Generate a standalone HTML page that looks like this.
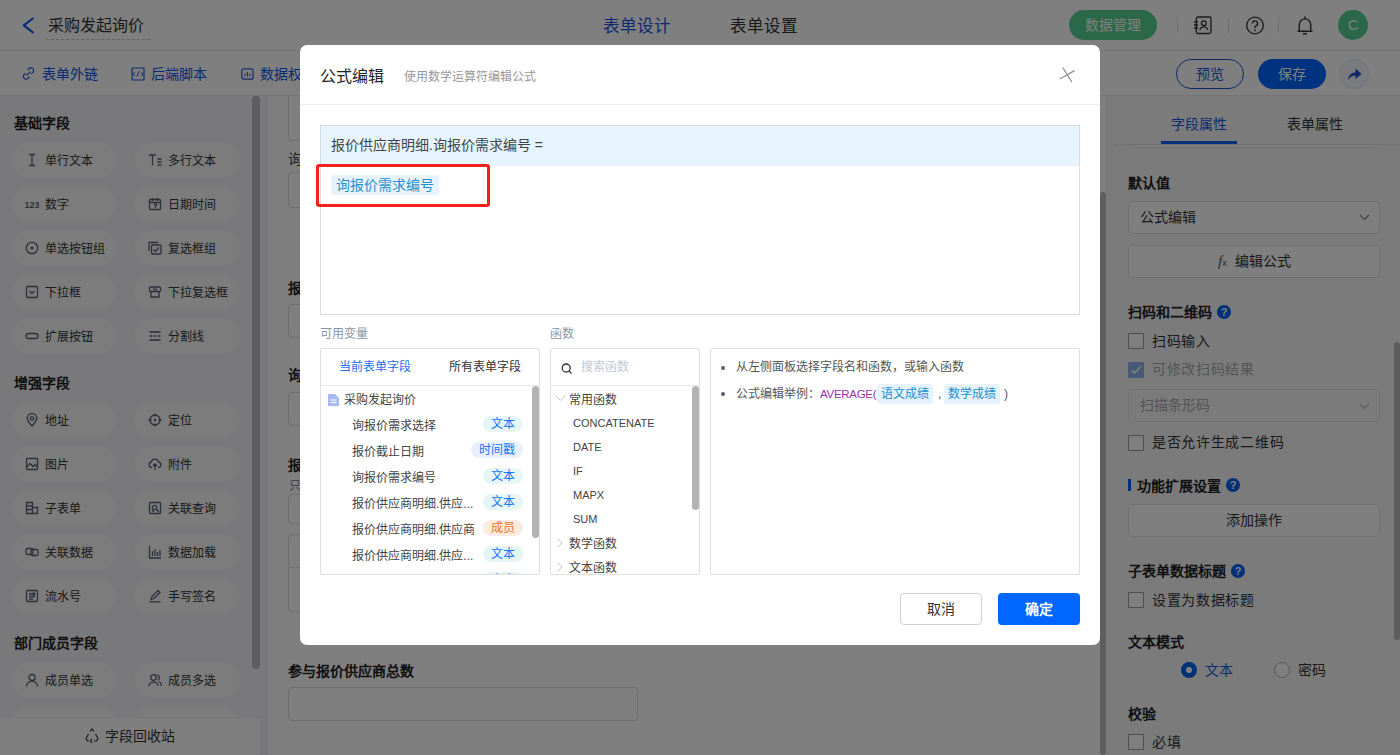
<!DOCTYPE html>
<html lang="zh-CN"><head><meta charset="utf-8">
<style>
*{box-sizing:border-box;margin:0;padding:0}
html,body{width:1400px;height:755px;overflow:hidden;background:#fff;font-family:"Liberation Sans",sans-serif;color:#333}
.a{position:absolute}
#hdr{left:0;top:0;width:1400px;height:51px;background:#fff;border-bottom:1px solid #e9e9e9}
#tb{left:0;top:51px;width:1400px;height:45px;background:#fff}
#lp{left:0;top:96px;width:268px;height:659px;background:#f2f3f6}
#cv{left:268px;top:96px;width:838px;height:659px;background:#fff}
#rp{left:1106px;top:96px;width:294px;height:659px;background:#f6f7f9}
.sec{font-size:14px;font-weight:bold;color:#1f1f1f}
.pill{width:104px;height:34px;border-radius:17px;background:#f8f9fb;font-size:12px;color:#333;line-height:36px;padding-left:33px;white-space:nowrap}
.pill svg{position:absolute;left:13px;top:10px;width:14px;height:14px}

.box{left:288px;width:350px;border:1px solid #dcdcdc;border-radius:4px;background:#fff}
.lab{left:288px;font-size:14px;font-weight:bold;color:#222;line-height:18px}
.rsec{font-size:14px;font-weight:bold;color:#222;line-height:20px;position:absolute;left:1128px}
.rbox{position:absolute;left:1128px;width:252px;height:33px;border:1px solid #dedede;border-radius:4px;background:#fff;font-size:14px;line-height:31px;color:#333}
.cb{position:absolute;left:1128px;width:16px;height:16px;border:1px solid #9c9ca4;border-radius:1px;background:#fff}
.ct{position:absolute;left:1152px;font-size:14px;color:#333;line-height:20px;letter-spacing:.7px}
.q{position:absolute;width:14px;height:14px;border-radius:7px;background:#0060f0;color:#fff;font-size:11px;font-weight:bold;line-height:14px;text-align:center}
.vi{font-size:12px;color:#444;line-height:19px;white-space:nowrap}
.tg{width:40px;height:16px;border-radius:8px;font-size:12px;line-height:16px;text-align:center}
.tc{background:#e6f6f6;color:#1677ff}
.tb2{background:#e8f0fd;color:#1677ff}
.to{background:#fdebe0;color:#f0711e}
.dt{height:20px;padding:0 4px;border-radius:3px;background:#e6f3fd;color:#1e8fd0;font-size:12px;line-height:20px}
#mask{left:0;top:0;width:1400px;height:755px;background:rgba(0,0,0,.5)}
#modal{left:300px;top:45px;width:800px;height:600px;background:#fff;border-radius:7px}
</style></head><body>
<!-- header -->
<div id="hdr" class="a">
  <svg class="a" style="left:20px;top:15px" width="16" height="21" viewBox="0 0 16 21"><path d="M12.8 3.5L3.8 10.3L12.8 17.3" fill="none" stroke="#0a55e6" stroke-width="2.1" stroke-linecap="round" stroke-linejoin="round"/></svg>
  <div class="a" style="left:48px;top:15px;font-size:16px;color:#333;line-height:22px">采购发起询价</div>
  <div class="a" style="left:46px;top:39px;width:104px;border-top:1px dashed #c8c8c8"></div>
  <div class="a" style="left:603px;top:15px;font-size:16.5px;color:#1a4fe0;line-height:22px">表单设计</div>
  <div class="a" style="left:730px;top:15px;font-size:16.5px;color:#333;line-height:22px">表单设置</div>
  <div class="a" style="left:1069px;top:10px;width:88px;height:30px;border-radius:15px;background:#56d192;color:#fff;font-size:14px;line-height:30px;text-align:center">数据管理</div>
  <div class="a" style="left:1177px;top:17px;width:1px;height:16px;background:#ddd"></div>
  <div class="a" style="left:1228px;top:17px;width:1px;height:16px;background:#ddd"></div>
  <div class="a" style="left:1278px;top:17px;width:1px;height:16px;background:#ddd"></div>

  <svg class="a" style="left:1192px;top:16px" width="20" height="19" viewBox="0 0 20 19"><rect x="4.3" y="1" width="14.7" height="16.5" rx="1.5" fill="none" stroke="#333" stroke-width="1.3"/><path d="M2 6h4M2 9h4M2 12h4" stroke="#333" stroke-width="1.3"/><circle cx="11.8" cy="7.2" r="2.4" fill="none" stroke="#333" stroke-width="1.3"/><path d="M7.7 14.2a4.2 4.2 0 0 1 8.2 0" fill="none" stroke="#333" stroke-width="1.3"/></svg>
  <svg class="a" style="left:1245px;top:16px" width="20" height="19" viewBox="0 0 20 19"><circle cx="10" cy="9.5" r="8.3" fill="none" stroke="#333" stroke-width="1.3"/><path d="M7.4 7.5a2.6 2.6 0 1 1 3.6 2.4c-.7.3-1 .8-1 1.5v.8" fill="none" stroke="#333" stroke-width="1.4"/><circle cx="10" cy="14.3" r=".9" fill="#333"/></svg>
  <svg class="a" style="left:1296px;top:16px" width="18" height="19" viewBox="0 0 18 19"><path d="M9 .6v1.6M3.3 15V8.6a5.7 5.7 0 0 1 11.4 0V15M1.5 15.2h15M7 17.8h4" fill="none" stroke="#333" stroke-width="1.4"/></svg>
  <div class="a" style="left:1338px;top:10px;width:30px;height:30px;border-radius:15px;background:#56d192;color:#fff;font-size:14px;line-height:30px;text-align:center">C</div>
</div>
<!-- toolbar -->
<div id="tb" class="a">

  <svg class="a" style="left:22px;top:16px" width="13" height="13" viewBox="0 0 13 13"><path d="M5.5 3.2l1.6-1.6a2.6 2.6 0 0 1 3.7 3.7L9.2 6.9M3.8 6.1L2.2 7.7a2.6 2.6 0 0 0 3.7 3.7L7.5 9.8M4.6 8.4l3.8-3.8" fill="none" stroke="#1a57d6" stroke-width="1.2"/></svg>
  <svg class="a" style="left:131px;top:16px" width="14" height="14" viewBox="0 0 14 14"><rect x="1" y="1" width="12" height="12" rx=".8" fill="none" stroke="#1a57d6" stroke-width="1.2"/><path d="M4.2 5L2 7l2.2 2M9.8 5L12 7 9.8 9M8 4.3L6 9.7" fill="none" stroke="#1a57d6" stroke-width="1"/></svg>
  <svg class="a" style="left:241px;top:17px" width="13" height="12" viewBox="0 0 13 12"><rect x=".8" y=".8" width="11.2" height="10.4" rx="2" fill="none" stroke="#1a57d6" stroke-width="1.2"/><path d="M4 5.5v3M6.4 4v4.5M8.8 5.5v3" stroke="#1a57d6" stroke-width="1"/></svg>
  <div class="a" style="left:42px;top:13px;font-size:14px;color:#0a55e6;line-height:20px">表单外链</div>
  <div class="a" style="left:151px;top:13px;font-size:14px;color:#0a55e6;line-height:20px">后端脚本</div>
  <div class="a" style="left:260px;top:13px;font-size:14px;color:#0a55e6;line-height:20px">数据权</div>
  <div class="a" style="left:1176px;top:8px;width:68px;height:30px;border-radius:15px;border:1px solid #1a57d6;color:#1a57d6;font-size:14px;line-height:28px;text-align:center">预览</div>
  <div class="a" style="left:1258px;top:8px;width:68px;height:30px;border-radius:15px;background:#0066ff;color:#fff;font-size:14px;line-height:30px;text-align:center">保存</div>
  <div class="a" style="left:1339px;top:8px;width:30px;height:30px;border-radius:15px;border:1px solid #dfe6f5;background:#f4f7fd"><svg class="a" style="left:7px;top:7px" width="15" height="14" viewBox="0 0 15 14"><path d="M1 13C1.5 8 4.5 5.5 8.5 5.5V1.5L14.5 7 8.5 12V8.5C5.5 8.5 3 9.8 1 13Z" fill="#1a4fd0"/></svg></div>
</div>
<div class="a" style="left:0;top:95px;width:1400px;height:1px;background:#ececec"></div>
<!-- left panel -->
<div id="lp" class="a"></div>
<div class="a sec" style="left:14px;top:112px">基础字段</div>
<div class="a pill" style="left:12px;top:143px"><svg viewBox="0 0 14 14"><path d="M4 1.5h6M4 12.5h6M7 1.5v11" fill="none" stroke="#596175" stroke-width="1.3"/></svg>单行文本</div>
<div class="a pill" style="left:135px;top:143px"><svg viewBox="0 0 14 14"><path d="M1 2h7M4.5 2v10.5M9.5 6h4M9.5 9h4M9.5 12h4" fill="none" stroke="#596175" stroke-width="1.3"/></svg>多行文本</div>
<div class="a pill" style="left:12px;top:187px"><svg viewBox="0 0 14 14"><text x="-0.5" y="10.5" font-size="9" font-weight="bold" fill="#596175" font-family="Liberation Sans">123</text></svg>数字</div>
<div class="a pill" style="left:135px;top:187px"><svg viewBox="0 0 14 14"><rect x="1.5" y="2.5" width="11" height="10" rx="1" fill="none" stroke="#596175" stroke-width="1.3"/><path d="M1.5 5.5h11M4.5 1v3M9.5 1v3M6 7.5h2.5l-1.5 3.5" fill="none" stroke="#596175" stroke-width="1.3"/></svg>日期时间</div>
<div class="a pill" style="left:12px;top:231px"><svg viewBox="0 0 14 14"><circle cx="7" cy="7" r="5.7" fill="none" stroke="#596175" stroke-width="1.3"/><circle cx="7" cy="7" r="1.6" fill="#596175"/></svg>单选按钮组</div>
<div class="a pill" style="left:135px;top:231px"><svg viewBox="0 0 14 14"><path d="M1 10V1.5h9" fill="none" stroke="#596175" stroke-width="1.3"/><rect x="3.5" y="4" width="9.5" height="9" rx="1" fill="none" stroke="#596175" stroke-width="1.3"/><path d="M5.5 8.5l2 2 3.5-4" fill="none" stroke="#596175" stroke-width="1.3"/></svg>复选框组</div>
<div class="a pill" style="left:12px;top:275px"><svg viewBox="0 0 14 14"><rect x="1.5" y="1.5" width="11" height="11" rx="1" fill="none" stroke="#596175" stroke-width="1.3"/><path d="M4.5 6l2.5 2.5 2.5-2.5" fill="none" stroke="#596175" stroke-width="1.3"/></svg>下拉框</div>
<div class="a pill" style="left:135px;top:275px"><svg viewBox="0 0 14 14"><rect x="1.5" y="2" width="11" height="4.5" rx="1" fill="none" stroke="#596175" stroke-width="1.3"/><path d="M3 6.5v5.5h8v-5.5M5 3.5l2 1.5 2-1.5" fill="none" stroke="#596175" stroke-width="1.3"/></svg>下拉复选框</div>
<div class="a pill" style="left:12px;top:319px"><svg viewBox="0 0 14 14"><rect x="1" y="4.5" width="12" height="5" rx="2.5" fill="none" stroke="#596175" stroke-width="1.3"/></svg>扩展按钮</div>
<div class="a pill" style="left:135px;top:319px"><svg viewBox="0 0 14 14"><path d="M1.5 3h11M1.5 7h3M6 7h2M9.5 7h3M1.5 11h11" fill="none" stroke="#596175" stroke-width="1.3"/></svg>分割线</div>
<div class="a sec" style="left:14px;top:372px">增强字段</div>
<div class="a pill" style="left:12px;top:403px"><svg viewBox="0 0 14 14"><path d="M7 13C3.5 9.5 2.3 7.3 2.3 5.3A4.7 4.7 0 0 1 11.7 5.3C11.7 7.3 10.5 9.5 7 13Z" fill="none" stroke="#596175" stroke-width="1.3"/><circle cx="7" cy="5.5" r="1.7" fill="none" stroke="#596175" stroke-width="1.3"/></svg>地址</div>
<div class="a pill" style="left:135px;top:403px"><svg viewBox="0 0 14 14"><circle cx="7" cy="7" r="5" fill="none" stroke="#596175" stroke-width="1.3"/><circle cx="7" cy="7" r="1.2" fill="#596175"/><path d="M7 0.5v3M7 10.5v3M0.5 7h3M10.5 7h3" fill="none" stroke="#596175" stroke-width="1.3"/></svg>定位</div>
<div class="a pill" style="left:12px;top:447px"><svg viewBox="0 0 14 14"><rect x="1.5" y="1.5" width="11" height="11" rx="1" fill="none" stroke="#596175" stroke-width="1.3"/><path d="M1.5 10l3.5-3.5 3 3 2-2 2.5 2.5" fill="none" stroke="#596175" stroke-width="1.3"/></svg>图片</div>
<div class="a pill" style="left:135px;top:447px"><svg viewBox="0 0 14 14"><path d="M4 10.5H3.5A2.8 2.8 0 0 1 3.3 5 3.8 3.8 0 0 1 10.7 5 2.8 2.8 0 0 1 10.5 10.5H10M7 13V7M5 9l2-2 2 2" fill="none" stroke="#596175" stroke-width="1.3"/></svg>附件</div>
<div class="a pill" style="left:12px;top:491px"><svg viewBox="0 0 14 14"><path d="M1.5 1.5h6v11h-6zM1.5 5h6M1.5 8.5h6M7.5 6.5h5v6h-5" fill="none" stroke="#596175" stroke-width="1.3"/></svg>子表单</div>
<div class="a pill" style="left:135px;top:491px"><svg viewBox="0 0 14 14"><rect x="1.5" y="1.5" width="11" height="11" rx="1" fill="none" stroke="#596175" stroke-width="1.3"/><circle cx="6.5" cy="6.5" r="2.2" fill="none" stroke="#596175" stroke-width="1.3"/><path d="M8 8l3 3M4 10h2" fill="none" stroke="#596175" stroke-width="1.3"/></svg>关联查询</div>
<div class="a pill" style="left:12px;top:535px"><svg viewBox="0 0 14 14"><rect x="1" y="3.5" width="7" height="6" rx="1.5" fill="none" stroke="#596175" stroke-width="1.3"/><rect x="6" y="4.5" width="7" height="6" rx="1.5" fill="none" stroke="#596175" stroke-width="1.3"/></svg>关联数据</div>
<div class="a pill" style="left:135px;top:535px"><svg viewBox="0 0 14 14"><path d="M1.5 1v12h11.5M4.5 6v5M7 4v7M9.5 7v4M12 5v6" fill="none" stroke="#596175" stroke-width="1.3"/></svg>数据加载</div>
<div class="a pill" style="left:12px;top:579px"><svg viewBox="0 0 14 14"><rect x="1.5" y="1.5" width="11" height="11" rx="1" fill="none" stroke="#596175" stroke-width="1.3"/><path d="M4 5h6M4 7.5h6M4 10h4M8 3.5l2 1.5-2 1.5" fill="none" stroke="#596175" stroke-width="1.3"/></svg>流水号</div>
<div class="a pill" style="left:135px;top:579px"><svg viewBox="0 0 14 14"><path d="M3 10.5l1-3L10 1.5l2 2-6 6zM1.5 12.8h11" fill="none" stroke="#596175" stroke-width="1.3"/></svg>手写签名</div>
<div class="a sec" style="left:14px;top:632px">部门成员字段</div>
<div class="a pill" style="left:12px;top:663px"><svg viewBox="0 0 14 14"><circle cx="7" cy="4.5" r="3" fill="none" stroke="#596175" stroke-width="1.3"/><path d="M1.5 13.5A5.5 5.5 0 0 1 12.5 13.5" fill="none" stroke="#596175" stroke-width="1.3"/></svg>成员单选</div>
<div class="a pill" style="left:135px;top:663px"><svg viewBox="0 0 14 14"><circle cx="5.5" cy="4.5" r="2.8" fill="none" stroke="#596175" stroke-width="1.3"/><path d="M0.8 13A4.8 4.8 0 0 1 10.2 13M9 1.8A2.8 2.8 0 0 1 9.5 7.2M11 8.5A4.8 4.8 0 0 1 13.5 13" fill="none" stroke="#596175" stroke-width="1.3"/></svg>成员多选</div>
<div class="a pill" style="left:12px;top:707px"><svg viewBox="0 0 14 14"><rect x="4.5" y="1" width="5" height="4" fill="none" stroke="#596175" stroke-width="1.3"/><path d="M7 5v3M2.5 11V8h9v3" fill="none" stroke="#596175" stroke-width="1.3"/></svg>部门单选</div>
<div class="a pill" style="left:135px;top:707px"><svg viewBox="0 0 14 14"><rect x="4.5" y="1" width="5" height="4" fill="none" stroke="#596175" stroke-width="1.3"/><path d="M7 5v3M2.5 11V8h9v3" fill="none" stroke="#596175" stroke-width="1.3"/></svg>部门多选</div>
<div class="a" style="left:252px;top:96px;width:8px;height:573px;border-radius:4px;background:#bcbcbc"></div>
<div class="a" style="left:0;top:717px;width:260px;height:38px;background:#fff;border-top:1px solid #eee;font-size:14px;line-height:37px;color:#333;padding-left:105px">字段回收站</div>
<svg class="a" style="left:84px;top:728px" width="16" height="16" viewBox="0 0 16 16"><path d="M6 3.5L8 1l2 2.5M11.5 6l2.5 4.5-1.5 2.5H10M5 13H3.5L2 10.5 4.5 6M8 15l-1.5-2L8 11" fill="none" stroke="#333" stroke-width="1.2"/></svg>

<div id="cv" class="a"></div>
<!-- center canvas -->
<div class="a" style="left:0;top:96px;width:1100px;height:659px;overflow:hidden">
<div class="a" style="left:289px;top:-12px;font-size:13px;color:#999;line-height:18px">询报价需求</div>
<div class="a box" style="top:-20px;height:65px"></div>
<div class="a lab" style="top:54px;font-weight:normal;color:#444">询报价需求选择</div>
<div class="a box" style="top:76px;height:36px"></div>
<div class="a lab" style="top:183px">报价截止日期</div>
<div class="a box" style="top:208px;height:34px"></div>
<div class="a lab" style="top:270px">询报价需求编号</div>
<div class="a box" style="top:296px;height:34px"></div>
<div class="a lab" style="top:360px">报价供应商明细</div>
<div class="a" style="left:289px;top:382px;font-size:12px;color:#7f8aa0;line-height:16px">只读</div>
<div class="a box" style="top:398px;height:30px"></div>
<div class="a box" style="top:438px;height:78px"></div>
<div class="a" style="left:288px;top:471px;width:350px;height:1px;background:#e5e5e5"></div>
<div class="a lab" style="top:566px">参与报价供应商总数</div>
<div class="a box" style="top:591px;height:34px"></div>
</div>
<div class="a" style="left:1100px;top:192px;width:6px;height:563px;border-radius:3px;background:#bdbdbd"></div>

<div id="rp" class="a"></div>
<!-- right panel -->
<div class="a" style="left:1171px;top:114px;font-size:14px;color:#1a57d6;line-height:20px">字段属性</div>
<div class="a" style="left:1287px;top:114px;font-size:14px;color:#333;line-height:20px">表单属性</div>
<div class="a" style="left:1114px;top:144px;width:286px;height:1px;background:#e3e3e3"></div>
<div class="a" style="left:1161px;top:141px;width:76px;height:3px;background:#0060f0"></div>
<div class="a" style="left:1128px;top:143px;width:252px;height:5px;border:1px solid #e3e3e3;border-top:none;border-radius:0 0 5px 5px"></div>
<div class="rsec" style="top:173px">默认值</div>
<div class="rbox" style="top:201px;padding-left:11px">公式编辑</div>
<svg class="a" style="left:1359px;top:214px" width="11" height="7" viewBox="0 0 11 7"><path d="M1 1l4.5 4.5L10 1" fill="none" stroke="#888" stroke-width="1.2"/></svg>
<div class="rbox" style="top:245px;text-align:center;padding-left:17px">编辑公式</div>
<div class="a" style="left:1218px;top:252px;font-family:'Liberation Serif',serif;font-style:italic;font-size:15px;color:#555;line-height:18px">f<span style="font-size:9px;font-style:normal;font-family:'Liberation Sans',sans-serif">x</span></div>
<div class="rsec" style="top:302px">扫码和二维码</div>
<div class="q" style="left:1217px;top:305px">?</div>
<div class="cb" style="top:333px"></div><div class="ct" style="top:331px">扫码输入</div>
<div class="cb" style="top:362px;background:#8fb0f0;border-color:#8fb0f0"></div>
<svg class="a" style="left:1130px;top:365px" width="12" height="10" viewBox="0 0 12 10"><path d="M1.5 5l3 3 6-6.5" fill="none" stroke="#fff" stroke-width="1.6"/></svg>
<div class="ct" style="top:359px;color:#aaa">可修改扫码结果</div>
<div class="rbox" style="top:389px;padding-left:11px;background:#f7f7f8;color:#aaa;border-color:#e6e6e6">扫描条形码</div>
<svg class="a" style="left:1359px;top:403px" width="11" height="7" viewBox="0 0 11 7"><path d="M1 1l4.5 4.5L10 1" fill="none" stroke="#bbb" stroke-width="1.2"/></svg>
<div class="cb" style="top:435px"></div><div class="ct" style="top:432px">是否允许生成二维码</div>
<div class="a" style="left:1128px;top:479px;width:3px;height:12px;background:#0060f0"></div>
<div class="rsec" style="top:476px;left:1137px">功能扩展设置</div>
<div class="q" style="left:1226px;top:478px">?</div>
<div class="rbox" style="top:504px;text-align:center">添加操作</div>
<div class="rsec" style="top:561px">子表单数据标题</div>
<div class="q" style="left:1231px;top:564px">?</div>
<div class="cb" style="top:592px"></div><div class="ct" style="top:590px">设置为数据标题</div>
<div class="rsec" style="top:632px">文本模式</div>
<div class="a" style="left:1181px;top:662px;width:16px;height:16px;border-radius:8px;border:5px solid #0060f0;background:#fff"></div>
<div class="a" style="left:1205px;top:660px;font-size:14px;color:#1a57d6;line-height:20px">文本</div>
<div class="a" style="left:1274px;top:662px;width:16px;height:16px;border-radius:8px;border:1px solid #b0b0b8;background:#fff"></div>
<div class="a" style="left:1298px;top:660px;font-size:14px;color:#333;line-height:20px">密码</div>
<div class="rsec" style="top:704px">校验</div>
<div class="cb" style="top:734px"></div><div class="ct" style="top:732px">必填</div>
<div class="a" style="left:1394px;top:342px;width:6px;height:298px;border-radius:3px;background:#bdbdbd"></div>


<div id="mask" class="a"></div>
<div id="modal" class="a">
  <div class="a" style="left:20px;top:21px;font-size:16px;color:#222;line-height:22px">公式编辑</div>
  <div class="a" style="left:104px;top:24px;font-size:12px;color:#999;line-height:17px">使用数学运算符编辑公式</div>
  <svg class="a" style="left:755px;top:15px" width="25" height="25" viewBox="0 0 25 25"><path d="M8 8L16.5 21.5M5.3 18.8L19.1 10.9" fill="none" stroke="#8f8f8f" stroke-width="1.3" stroke-linecap="round"/></svg>
  <div class="a" style="left:0;top:59px;width:800px;height:1px;background:#ececec"></div>
  <!-- formula box -->
  <div class="a" style="left:20px;top:80px;width:760px;height:190px;border:1px solid #dcdcdc;background:#fff"></div>
  <div class="a" style="left:21px;top:81px;width:758px;height:40px;background:#e6f4fe"></div>
  <div class="a" style="left:31px;top:90px;font-size:14px;color:#444;line-height:20px">报价供应商明细.询报价需求编号 =</div>
  <div class="a" style="left:31px;top:130px;height:20px;padding:0 5px;background:#e8f4fd;border-radius:2px;font-size:14px;color:#1e8fd0;line-height:20px">询报价需求编号</div>
  <div class="a" style="left:16px;top:119px;width:174px;height:43px;border:3px solid #f5211d;border-radius:3px"></div>
  <!-- labels -->
  <div class="a" style="left:20px;top:281px;font-size:12px;color:#8b95a7;line-height:17px">可用变量</div>
  <div class="a" style="left:250px;top:281px;font-size:12px;color:#8b95a7;line-height:17px">函数</div>
  <!-- vars panel -->
  <div class="a" style="left:20px;top:303px;width:220px;height:227px;border:1px solid #e0e0e0;border-radius:2px;overflow:hidden">
    <div class="a" style="left:18px;top:10px;font-size:12px;color:#1a6ff2;line-height:17px">当前表单字段</div>
    <div class="a" style="left:128px;top:10px;font-size:12px;color:#333;line-height:17px">所有表单字段</div>
    <div class="a" style="left:0;top:36px;width:220px;height:1px;background:#e6e6e6"></div>
    <svg class="a" style="left:7px;top:45px" width="11" height="12" viewBox="0 0 11 12"><path d="M0 0h7l4 4v8H0z" fill="#a9b8f3"/><path d="M2.5 6h6M2.5 8.5h6" stroke="#fff" stroke-width="1"/></svg>
    <div class="a vi" style="left:23px;top:42px">采购发起询价</div>
    <div class="a vi" style="left:31px;top:68px">询报价需求选择</div><div class="a tg tc" style="top:67px;left:162px">文本</div>
    <div class="a vi" style="left:31px;top:94px">报价截止日期</div><div class="a tg tb2" style="top:93px;left:150px;width:52px">时间戳</div>
    <div class="a vi" style="left:31px;top:120px">询报价需求编号</div><div class="a tg tc" style="top:119px;left:162px">文本</div>
    <div class="a vi" style="left:31px;top:146px">报价供应商明细.供应...</div><div class="a tg tc" style="top:145px;left:162px">文本</div>
    <div class="a vi" style="left:31px;top:172px">报价供应商明细.供应商</div><div class="a tg to" style="top:171px;left:162px">成员</div>
    <div class="a vi" style="left:31px;top:198px">报价供应商明细.供应...</div><div class="a tg tc" style="top:197px;left:162px">文本</div>
    <div class="a tg tc" style="top:223px;left:162px">文本</div>
    <div class="a" style="left:211px;top:37px;width:7px;height:152px;border-radius:4px;background:#b3b3b3"></div>
  </div>
  <!-- funcs panel -->
  <div class="a" style="left:250px;top:303px;width:150px;height:227px;border:1px solid #e0e0e0;border-radius:2px;overflow:hidden">
    <svg class="a" style="left:10px;top:14px" width="12" height="11" viewBox="0 0 12 11"><circle cx="5.2" cy="5" r="4" fill="none" stroke="#333" stroke-width="1.3"/><path d="M8 8l2.5 2.5" stroke="#333" stroke-width="1.3"/></svg>
    <div class="a" style="left:30px;top:10px;font-size:12px;color:#c3c9d5;line-height:17px">搜索函数</div>
    <div class="a" style="left:0;top:36px;width:150px;height:1px;background:#e6e6e6"></div>
    <svg class="a" style="left:4px;top:46px" width="11" height="7" viewBox="0 0 11 7"><path d="M0.5 0.5l5 5 5-5" fill="none" stroke="#c5c9d2" stroke-width="1"/></svg>
    <div class="a vi" style="left:18px;top:42px">常用函数</div>
    <div class="a vi" style="left:22px;top:65px;font-size:11px;color:#444">CONCATENATE</div>
    <div class="a vi" style="left:22px;top:89px;font-size:11px;color:#444">DATE</div>
    <div class="a vi" style="left:22px;top:113px;font-size:11px;color:#444">IF</div>
    <div class="a vi" style="left:22px;top:137px;font-size:11px;color:#444">MAPX</div>
    <div class="a vi" style="left:22px;top:161px;font-size:11px;color:#444">SUM</div>
    <svg class="a" style="left:6px;top:189px" width="6" height="10" viewBox="0 0 6 10"><path d="M0.5 0.5l4.5 4.5-4.5 4.5" fill="none" stroke="#c5c9d2" stroke-width="1"/></svg>
    <div class="a vi" style="left:18px;top:186px">数学函数</div>
    <svg class="a" style="left:6px;top:213px" width="6" height="10" viewBox="0 0 6 10"><path d="M0.5 0.5l4.5 4.5-4.5 4.5" fill="none" stroke="#c5c9d2" stroke-width="1"/></svg>
    <div class="a vi" style="left:18px;top:210px">文本函数</div>
    <div class="a" style="left:141px;top:37px;width:7px;height:124px;border-radius:4px;background:#b3b3b3"></div>
  </div>
  <!-- desc panel -->
  <div class="a" style="left:410px;top:303px;width:370px;height:227px;border:1px solid #e0e0e0;border-radius:2px">
    <div class="a" style="left:10px;top:17px;width:4px;height:4px;border-radius:2px;background:#555c6b"></div>
    <div class="a" style="left:25px;top:10px;font-size:12px;color:#555;line-height:17px">从左侧面板选择字段名和函数，或输入函数</div>
    <div class="a" style="left:10px;top:43px;width:4px;height:4px;border-radius:2px;background:#555c6b"></div>
    <div class="a" style="left:25px;top:37px;font-size:12px;color:#555;line-height:17px;white-space:nowrap">公式编辑举例：<span style="color:#9b2fa6;font-size:11.5px;letter-spacing:-.3px">AVERAGE(</span></div>
    <div class="a dt" style="left:166px;top:35px">语文成绩</div>
    <div class="a" style="left:227px;top:37px;font-size:12px;color:#555;line-height:17px">,</div>
    <div class="a dt" style="left:233px;top:35px">数学成绩</div>
    <div class="a" style="left:293px;top:37px;font-size:12px;color:#555;line-height:17px">)</div>
  </div>
  <!-- buttons -->
  <div class="a" style="left:600px;top:548px;width:82px;height:32px;border:1px solid #d0d0d0;border-radius:4px;font-size:14px;color:#333;line-height:30px;text-align:center">取消</div>
  <div class="a" style="left:698px;top:548px;width:82px;height:32px;border-radius:4px;background:#0066ff;font-size:14px;font-weight:bold;color:#fff;line-height:32px;text-align:center">确定</div>
</div>
</body></html>
